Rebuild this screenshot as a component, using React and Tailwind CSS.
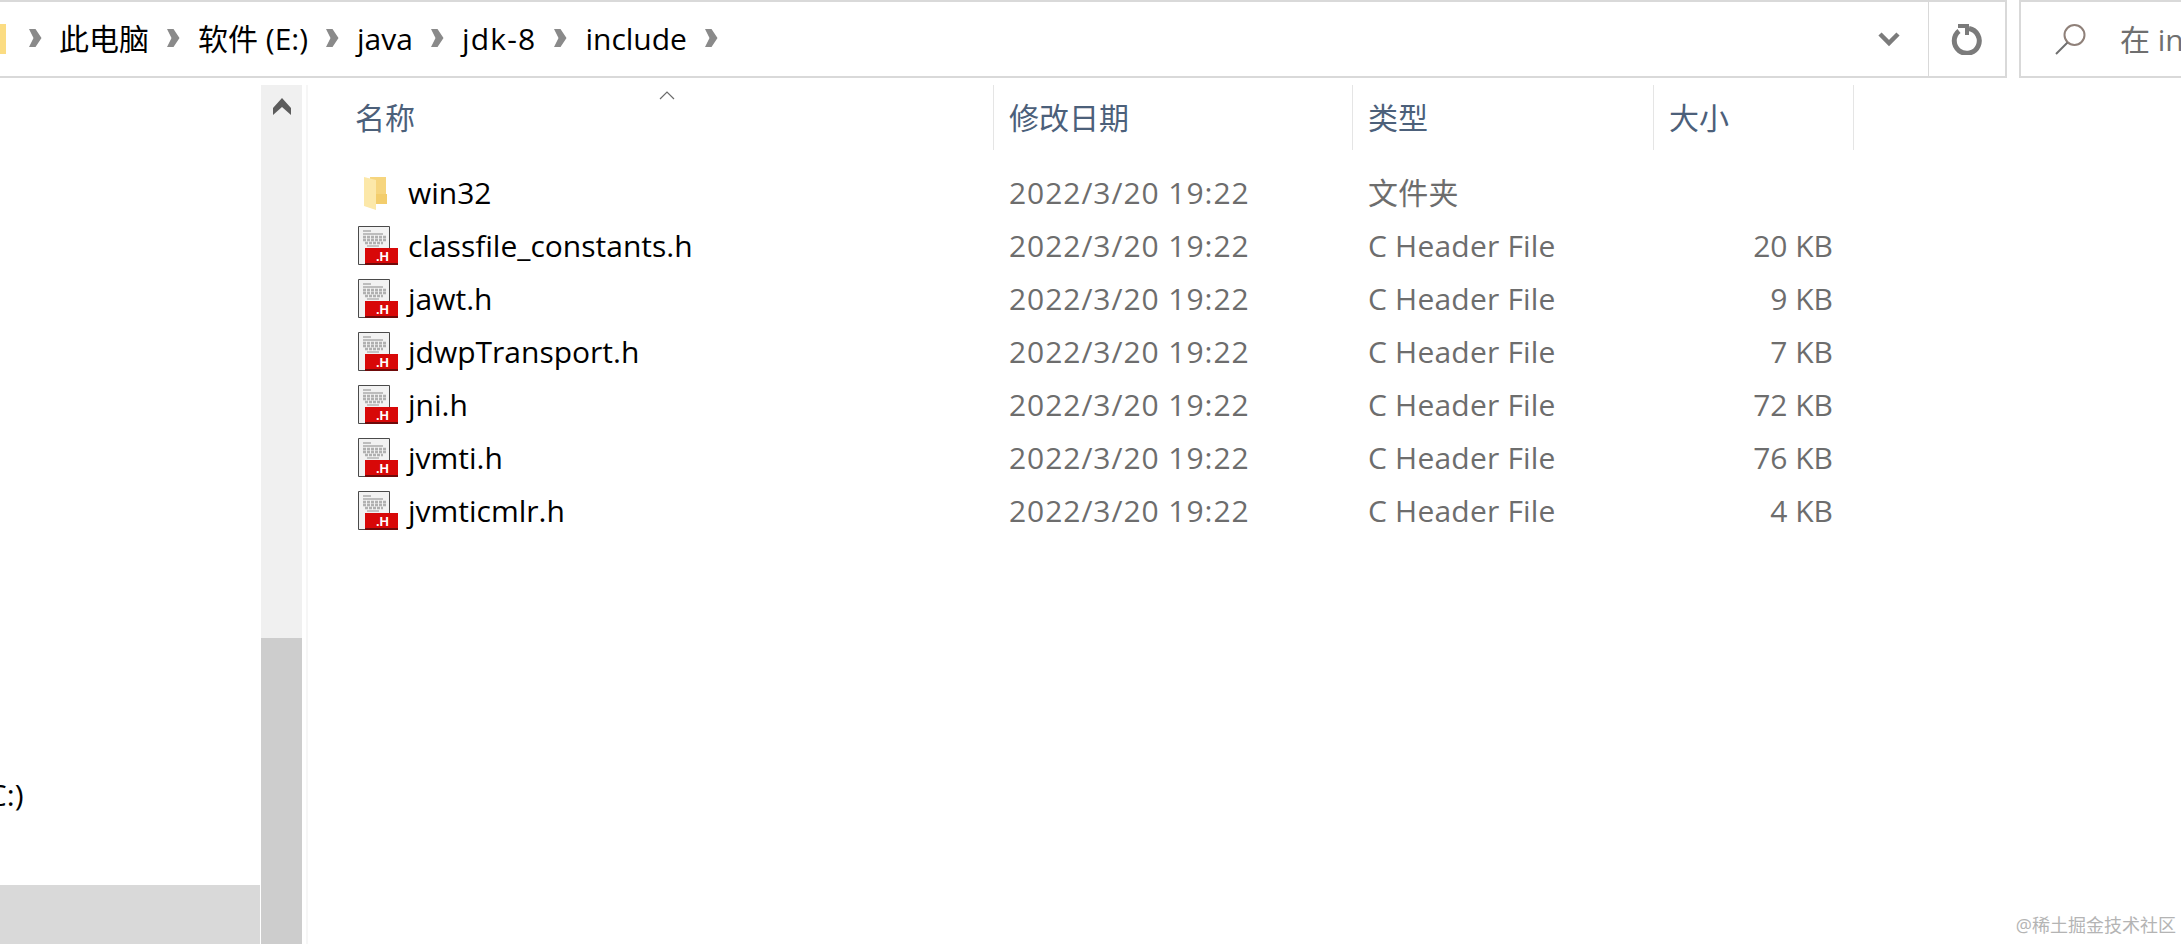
const FONT = '"Open Sans", "Noto Sans CJK SC", sans-serif';

const COLS = ['w-[686px]', 'w-[359px]', 'w-[301px]', 'w-[200px]'];

const FILES = [
    { name: 'win32', type: '文件夹', size: '', folder: true },
    { name: 'classfile_constants.h', type: 'C Header File', size: '20 KB' },
    { name: 'jawt.h', type: 'C Header File', size: '9 KB' },
    { name: 'jdwpTransport.h', type: 'C Header File', size: '7 KB' },
    { name: 'jni.h', type: 'C Header File', size: '72 KB' },
    { name: 'jvmti.h', type: 'C Header File', size: '76 KB' },
    { name: 'jvmticmlr.h', type: 'C Header File', size: '4 KB' },
];

const CRUMBS = [
    { label: '此电脑', cls: '' },
    { label: '软件 (E:)', cls: '' },
    { label: 'java', cls: '' },
    { label: 'jdk-8', cls: 'tracking-[1.2px]' },
    { label: 'include', cls: '' },
];

function Chevron() {
    return (
        <svg width="13" height="20" viewBox="0 0 13 20" className="shrink-0">
            <path d="M0 1h6.5l6 9-6 9H0l4.5-9z" fill="#8a8a8a" />
        </svg>
    );
}

function FolderIcon() {
    return (
        <svg width="24" height="34" viewBox="0 0 24 34">
            <path d="M7 1h16v27H7z" fill="#f6d57e" />
            <path d="M1 1l12 3v30L1 30z" fill="#fce8a9" />
            <path d="M13 18h11v10H13z" fill="#f3cd6c" />
        </svg>
    );
}

function HeaderFileIcon() {
    return (
        <svg width="40" height="40" viewBox="0 0 40 40">
            <path d="M.5.5h31v38H.5z" fill="#f2f2f2" stroke="#4a4a4a" />
            <path d="M5 5h8M5 8h20" stroke="#bdbdbd" strokeWidth="2" />
            <path d="M5 11h24M5 14h24M7 17h18" stroke="#b0b0b0" strokeWidth="2.5" strokeDasharray="3 1" />
            <path d="M9 20h12" stroke="#c4c4c4" strokeWidth="2" />
            <path d="M7 22h33v17H7z" fill="#d80808" />
            <path d="M7 37h33v2H7z" fill="#6f0a0a" />
            <text x="18" y="35" fill="#fff" fontSize="13" fontWeight="700" fontFamily="Liberation Sans, sans-serif">.H</text>
        </svg>
    );
}

function FileRow({ file }) {
    return (
        <div className="flex h-[53px] items-center text-[#6d6d6d]">
            <div className={`${COLS[0]} flex items-center`}>
                <div className="ml-[50px] flex w-[50px] justify-start">
                    {file.folder ? <span className="ml-[5px] flex"><FolderIcon /></span> : <HeaderFileIcon />}
                </div>
                <span className="text-black">{file.name}</span>
            </div>
            <div className={`${COLS[1]} pl-[15px] tracking-[0.95px]`}>2022/3/20 19:22</div>
            <div className={`${COLS[2]} pl-[15px] tracking-[0.2px]`}>{file.type}</div>
            <div className={`${COLS[3]} pr-[21px] text-right`}>{file.size}</div>
        </div>
    );
}

export default function App() {
    return (
        <div className="relative flex h-[944px] w-[2181px] flex-col overflow-hidden bg-white text-[30px]" style={{ fontFamily: FONT }}>
            {/* address bar */}
            <div className="flex h-[78px] shrink-0 items-stretch">
                <div className="flex w-[1929px] shrink-0 items-center border-y-2 border-r border-[#d9d9d9]">
                    <div className="h-[30px] w-[6px] shrink-0 bg-[#fbdc82]" />
                    <div className="-mt-[2px] ml-[23px] flex items-center gap-[18px] text-black">
                        {CRUMBS.map((c, i) => (
                            <div key={c.label} className={`flex items-center ${i === 0 ? 'gap-[17px]' : 'gap-[18px]'}`}>
                                <Chevron />
                                <span className={c.cls}>{c.label}</span>
                            </div>
                        ))}
                        <Chevron />
                    </div>
                    <svg width="24" height="16" viewBox="0 0 24 16" className="ml-auto mr-[27px]">
                        <path d="M3 3l9 9 9-9" fill="none" stroke="#7b7b7b" strokeWidth="4.5" />
                    </svg>
                </div>
                <div className="flex w-[78px] shrink-0 items-center justify-center border-y-2 border-r-2 border-[#d9d9d9]">
                    <svg width="32" height="32" viewBox="0 0 32 32">
                        <path d="M8 8a12.5 12.5 0 1 0 10-2.5" fill="none" stroke="#7b7b7b" strokeWidth="5" />
                        <path d="M7 1h11v11h-4V5H7z" fill="#7b7b7b" />
                    </svg>
                </div>
                <div className="ml-[12px] flex min-w-0 flex-1 items-center overflow-hidden border-y-2 border-l-2 border-[#d9d9d9] pl-[34px] text-[#6f6f6f]">
                    <svg width="32" height="32" viewBox="0 0 32 32" className="shrink-0">
                        <circle cx="19.5" cy="12" r="10" fill="none" stroke="#8f8079" strokeWidth="2" />
                        <path d="M12.5 19.5L1 31" stroke="#6f6f6f" strokeWidth="2" />
                    </svg>
                    <span className="ml-[33px] whitespace-nowrap">在 include 中搜索</span>
                </div>
            </div>

            <div className="flex min-h-0 flex-1 pt-[7px]">
                {/* navigation pane */}
                <div className="flex w-[261px] shrink-0 flex-col justify-end overflow-hidden">
                    <div className="mb-[68px] -ml-[21px] text-black">(C:)</div>
                    <div className="h-[59px] border-r border-white bg-[#d9d9d9]" />
                </div>
                <div className="flex w-[41px] shrink-0 flex-col bg-[#f0f0f0]">
                    <div className="flex h-[553px] justify-center pt-[13px]">
                        <svg width="20" height="18" viewBox="0 0 20 18">
                            <path d="M10 0l9 10v7l-9-8-9 8v-7z" fill="#5c5c5c" />
                        </svg>
                    </div>
                    <div className="flex-1 bg-[#cdcdcd]" />
                </div>

                {/* file list */}
                <div className="ml-[4px] flex-1 border-l-2 border-[#f6f6f6]">
                    <div className="relative flex h-[65px] items-center text-[#4c607a]">
                        <div className={`${COLS[0]} h-full border-r border-[#e5e5e5] pl-[47px] leading-[65px]`}>名称</div>
                        <div className={`${COLS[1]} h-full border-r border-[#e5e5e5] pl-[15px] leading-[65px]`}>修改日期</div>
                        <div className={`${COLS[2]} h-full border-r border-[#e5e5e5] pl-[15px] leading-[65px]`}>类型</div>
                        <div className={`${COLS[3]} h-full border-r border-[#e5e5e5] pl-[15px] leading-[65px]`}>大小</div>
                        <svg width="16" height="9" viewBox="0 0 16 9" className="absolute left-[351px] top-[6px]">
                            <path d="M1 8l7-7 7 7" fill="none" stroke="#6b6b6b" strokeWidth="1.2" />
                        </svg>
                    </div>
                    <div className="pt-[16px]">
                        {FILES.map(f => <FileRow key={f.name} file={f} />)}
                    </div>
                </div>
            </div>

            <div className="absolute bottom-[5px] right-[5px] text-[18px] text-[#b4b4b4]">@稀土掘金技术社区</div>
        </div>
    );
}
